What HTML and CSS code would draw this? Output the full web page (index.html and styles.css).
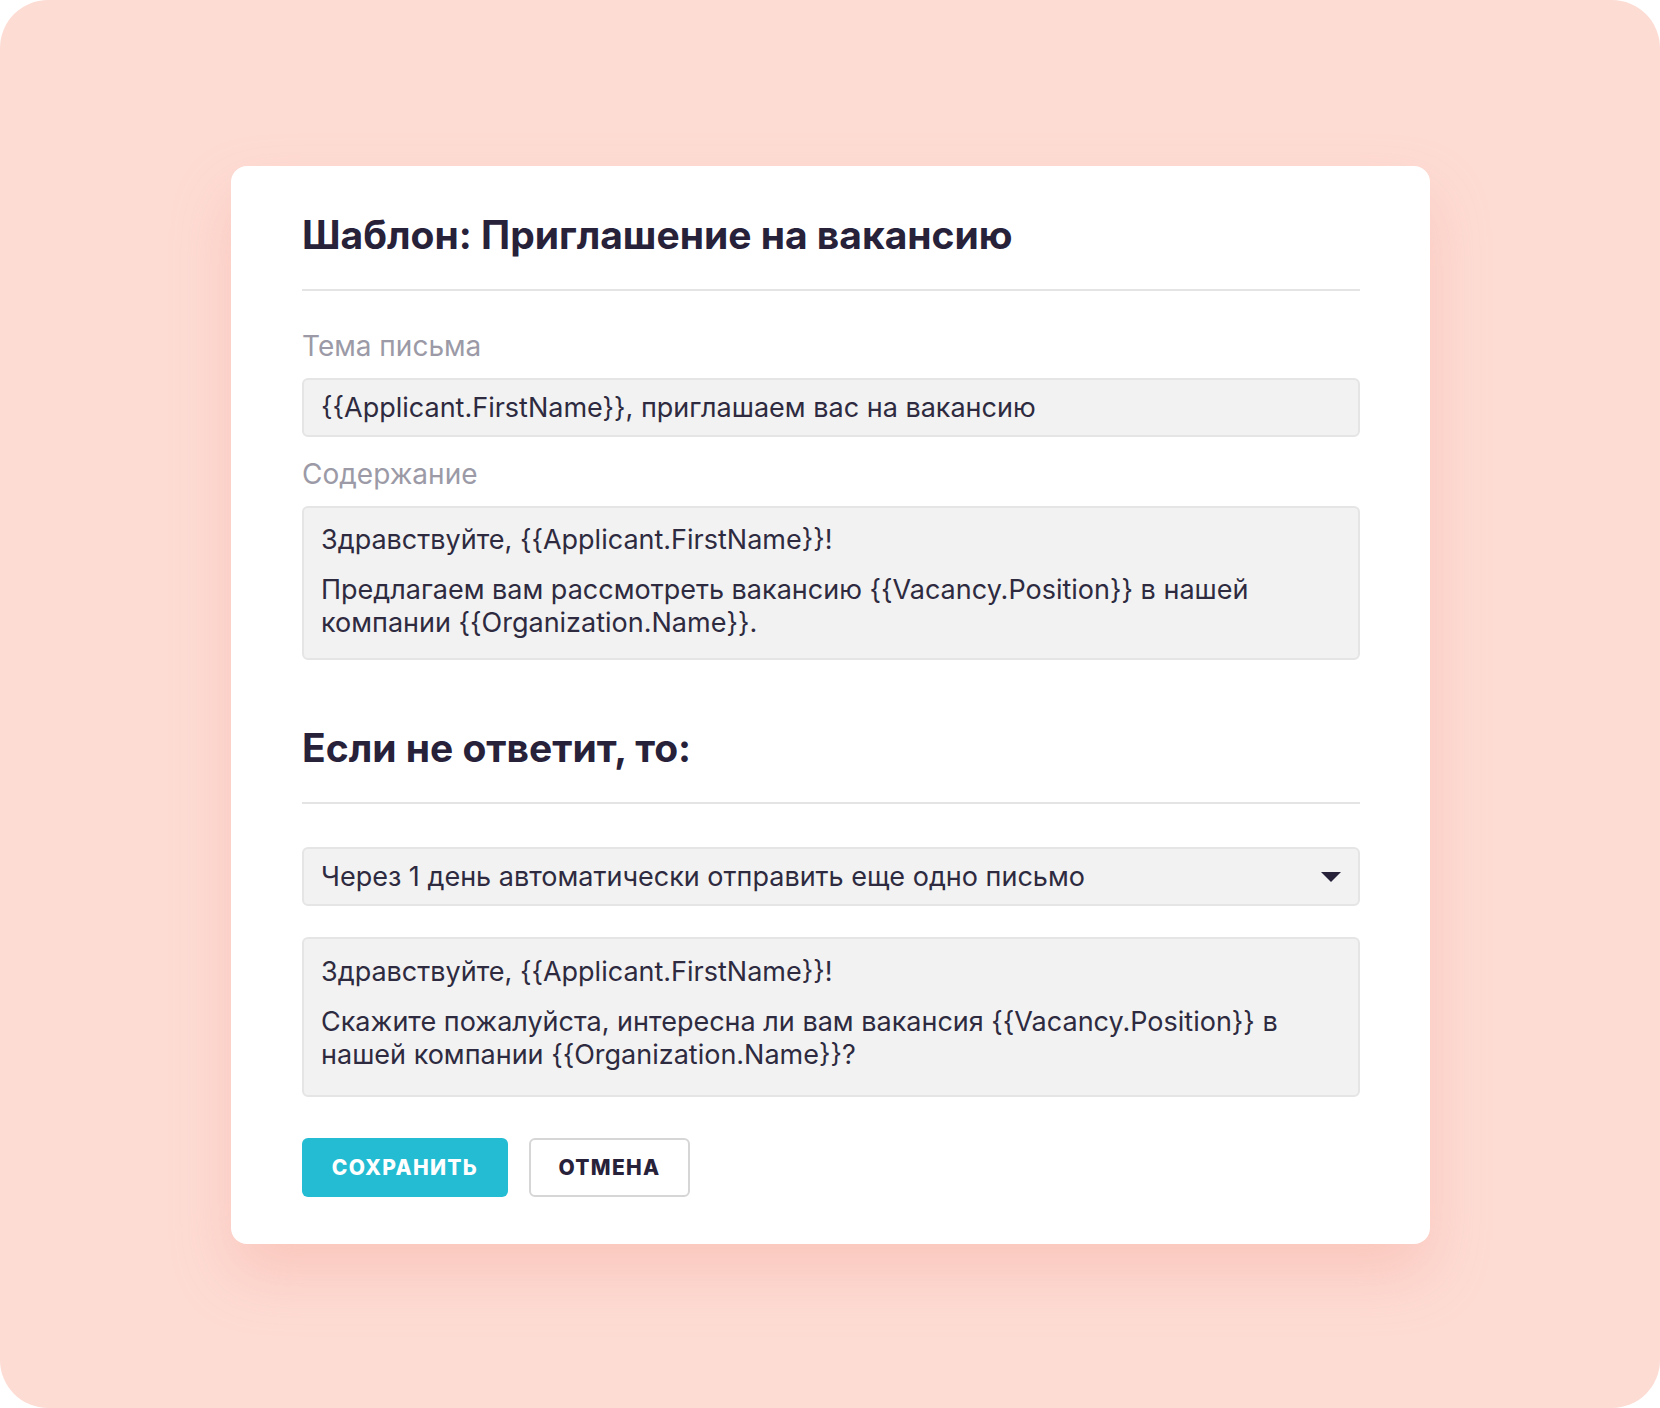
FILE: index.html
```html
<!DOCTYPE html>
<html lang="ru">
<head>
  <meta charset="UTF-8" />
  <meta name="viewport" content="width=device-width, initial-scale=1.0"/>
  <title>Шаблон письма</title>
  <link rel="stylesheet" href="styles.css">
</head>
<body>
  <div class="frame">
    <div class="card">
      <h1 class="title">Шаблон: Приглашение на вакансию</h1>
      <hr class="divider">

      <div class="label label-first">Тема письма</div>
      <div class="field">{{Applicant.FirstName}}, приглашаем вас на вакансию</div>

      <div class="label">Содержание</div>
      <div class="field area">
        <p>Здравствуйте, {{Applicant.FirstName}}!</p>
        <p>Предлагаем вам рассмотреть вакансию {{Vacancy.Position}} в нашей компании {{Organization.Name}}.</p>
      </div>

      <h2 class="title title-second">Если не ответит, то:</h2>
      <hr class="divider">

      <div class="field select">
        <span>Через 1 день автоматически отправить еще одно письмо</span>
        <span class="arrow"></span>
      </div>

      <div class="field area area-second">
        <p>Здравствуйте, {{Applicant.FirstName}}!</p>
        <p>Скажите пожалуйста, интересна ли вам вакансия {{Vacancy.Position}} в нашей компании {{Organization.Name}}?</p>
      </div>

      <div class="actions">
        <button class="btn btn-save">Сохранить</button>
        <button class="btn btn-cancel">Отмена</button>
      </div>
    </div>
  </div>
</body>
</html>
```

FILE: styles.css
```css
body {
  margin: 0;
  background: #fff;
  font-family: 'Inter', 'Noto Sans', sans-serif;
  color: #2e2a40;
}

.frame {
  height: 1408px;
  box-sizing: border-box;
  border-radius: 48px;
  background: #fddcd4;
  padding: 166px 0 0 231px;
}

.card {
  width: 1199px;
  box-sizing: border-box;
  background: #fff;
  border-radius: 16px;
  padding: 46px 70px 47px 71px;
  box-shadow: 0 30px 60px rgba(244, 150, 135, 0.3);
}

.title {
  margin: 0;
  font-size: 39px;
  line-height: 46px;
  font-weight: 700;
  color: #27213a;
}

.title-second {
  margin-top: 65px;
}

.divider {
  border: none;
  height: 2px;
  background: #e4e4e4;
  margin: 31px 0 0;
}

.label {
  font-size: 28px;
  line-height: 32px;
  color: #9b9aa6;
  margin: 21px 0 16px;
}

.label-first {
  margin-top: 39px;
}

.field {
  box-sizing: border-box;
  background: #f2f2f2;
  border: 2px solid #e5e5e5;
  border-radius: 6px;
  padding: 0 17px;
  font-size: 27px;
  line-height: 33px;
  height: 59px;
  display: flex;
  align-items: center;
}

.area {
  display: block;
  height: auto;
  padding: 15px 17px 19px;
}

.area p {
  margin: 0;
}

.area p + p {
  margin-top: 17px;
}

.area-second {
  margin-top: 31px;
  padding-top: 16px;
  padding-bottom: 24px;
}

.select {
  margin-top: 43px;
  justify-content: space-between;
}

.arrow {
  width: 0;
  height: 0;
  border-left: 10px solid transparent;
  border-right: 10px solid transparent;
  border-top: 10px solid #27213a;
}

.actions {
  display: flex;
  gap: 21px;
  margin-top: 41px;
}

.btn {
  height: 59px;
  box-sizing: border-box;
  border-radius: 6px;
  font-family: 'Inter', 'Noto Sans', sans-serif;
  font-size: 21px;
  font-weight: 800;
  letter-spacing: 1.3px;
  text-transform: uppercase;
  cursor: pointer;
}

.btn-save {
  width: 206px;
  background: #23bcd3;
  border: none;
  color: #fff;
}

.btn-cancel {
  width: 161px;
  background: #fff;
  border: 2px solid #d6d6d6;
  color: #27213a;
}
```
